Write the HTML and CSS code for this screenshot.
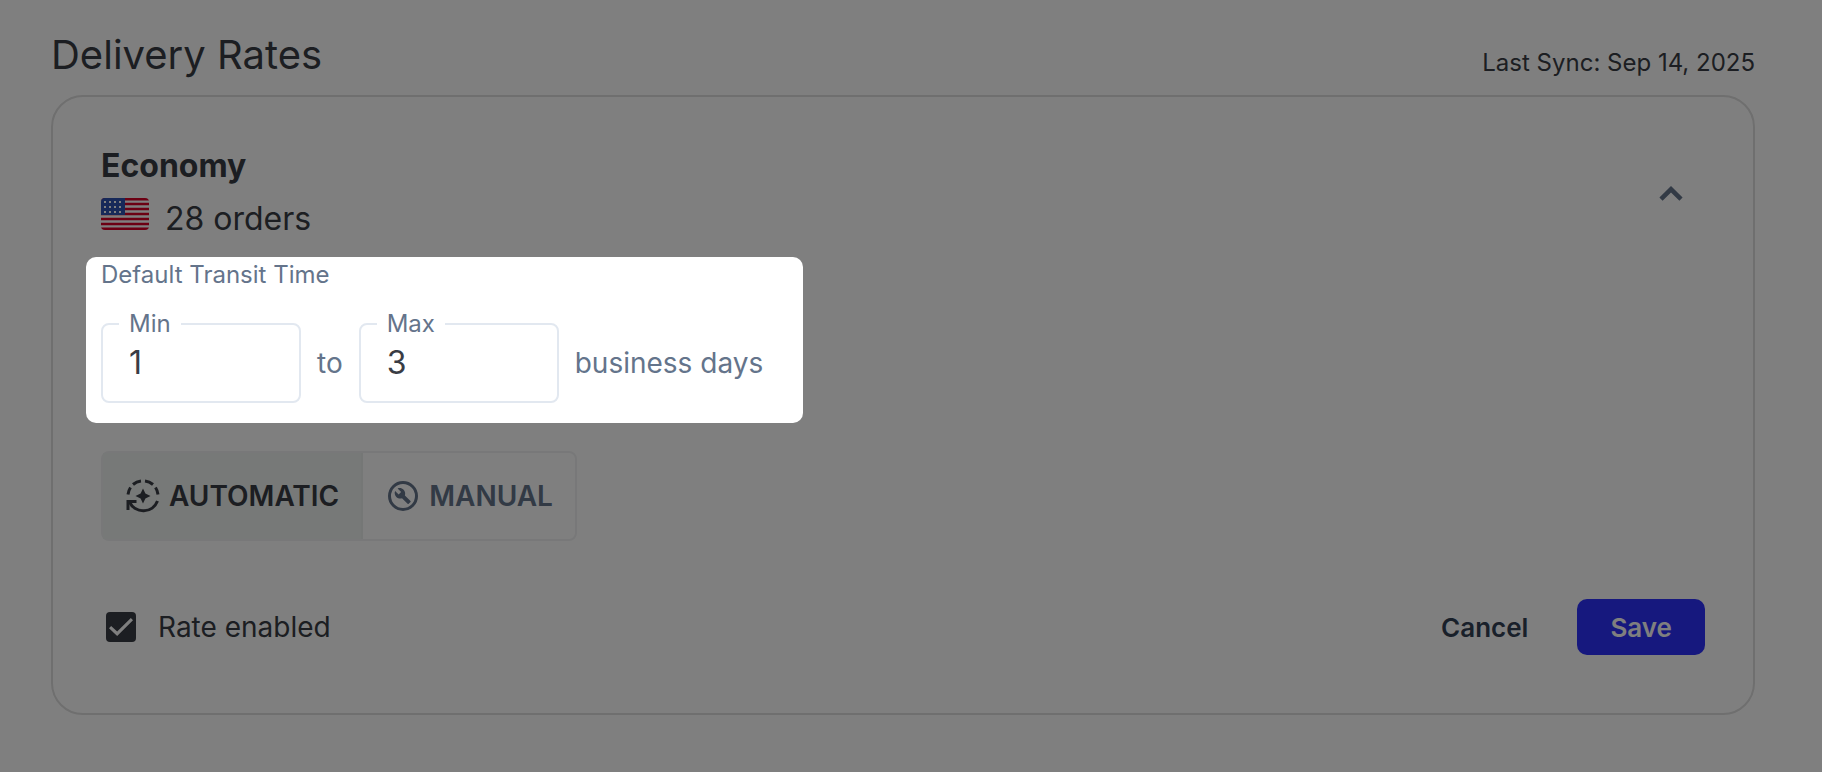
FILE: index.html
```html
<!DOCTYPE html>
<html lang="en">
<head>
  <meta charset="UTF-8">
  <meta name="viewport" content="width=device-width, initial-scale=1.0">
  <title>Delivery Rates</title>
  <link rel="stylesheet" href="styles.css">
</head>
<body>
  <header class="page-header">
    <h1>Delivery Rates</h1>
    <p class="last-sync">Last Sync: Sep 14, 2025</p>
  </header>

  <main class="card">
    <!-- Rate summary -->
    <div class="summary">
      <div>
        <h2>Economy</h2>
        <div class="orders">
          <svg class="flag" viewBox="0 0 48 32" role="img" aria-label="United States">
            <rect width="48" height="32" fill="#fff"/>
            <path d="M0 1.2h48M0 6.1h48M0 11.1h48M0 16h48M0 20.9h48M0 25.9h48M0 30.8h48" stroke="#d80027" stroke-width="2.5"/>
            <rect width="24" height="17" fill="#2e52b2"/>
            <path d="M3 4h17M3 9h17M3 14h17" stroke="#fff" stroke-width="2" stroke-dasharray="2 3"/>
          </svg>
          <span>28 orders</span>
        </div>
      </div>
      <button class="collapse" type="button" aria-label="Collapse">
        <svg viewBox="0 0 24 24"><path d="M12 8.500l-5.800 5.800 1.600 1.600L12 11.700l4.200 4.200 1.600-1.600z"/></svg>
      </button>
    </div>

    <!-- Highlighted step, everything around it is dimmed -->
    <section class="transit">
      <h3>Default Transit Time</h3>
      <div class="range">
        <fieldset class="field">
          <legend><label for="min">Min</label></legend>
          <input type="text" inputmode="numeric" id="min" value="1">
        </fieldset>
        <span class="unit">to</span>
        <fieldset class="field">
          <legend><label for="max">Max</label></legend>
          <input type="text" inputmode="numeric" id="max" value="3">
        </fieldset>
        <span class="unit">business days</span>
      </div>
    </section>

    <div class="toggle">
      <button class="toggle-btn active" type="button" aria-pressed="true">
        <svg viewBox="0 0 36 36">
          <path d="M3 16.500A15 15 0 0 1 5.500 9.500M8 6.500A15 15 0 0 1 16 3M20 3A15 15 0 0 1 28 6.500M30.500 9.500A15 15 0 0 1 33 16.500" fill="none" stroke="currentColor" stroke-width="3"/>
          <path d="M32.500 23A15.200 15.200 0 0 1 4.500 24" fill="none" stroke="currentColor" stroke-width="3"/>
          <path d="M3 32V23.500H11.500" fill="none" stroke="currentColor" stroke-width="3"/>
          <path d="M18 10.500l2.400 5.100L25.500 18l-5.100 2.400L18 25.500l-2.400-5.100L10.500 18l5.100-2.400z"/>
        </svg>
        AUTOMATIC
      </button>
      <button class="toggle-btn" type="button" aria-pressed="false">
        <svg viewBox="0 0 36 36">
          <circle cx="18" cy="18" r="13.500" fill="none" stroke="currentColor" stroke-width="3"/>
          <path d="M25.500 23l-5.600-5.500c.7-2 .2-4.200-1.300-5.800-1.600-1.600-4-2-6-1.200l3.500 3.500-2.500 2.500-3.500-3.500c-.8 2-.4 4.300 1.200 5.900 1.500 1.500 3.700 2 5.700 1.400l5.600 5.500c.3.300.8.300 1.100 0l1.800-1.800c.3-.3.300-.8 0-1z"/>
        </svg>
        MANUAL
      </button>
    </div>

    <div class="footer">
      <label class="enabled"><input type="checkbox" checked> Rate enabled</label>
      <div class="actions">
        <button class="btn" type="button">Cancel</button>
        <button class="btn primary" type="button">Save</button>
      </div>
    </div>
  </main>
</body>
</html>
```

FILE: styles.css
```css
* {
  box-sizing: border-box;
}
body {
  font-family: Inter, "Liberation Sans", sans-serif;
  background-color: #fff;
  color: #393c44;
  min-height: 100vh;
  margin: 0;
  padding: 31px 67px 32px 51px;
  overflow-x: hidden;
}
h1, h2, h3, p {
  margin: 0;
  font-weight: 400;
}
button {
  font-family: inherit;
  background: none;
  border: none;
  padding: 0;
  cursor: pointer;
}
svg {
  display: block;
  flex: none;
  fill: currentColor;
}
.page-header {
  display: flex;
  justify-content: space-between;
  align-items: flex-end;
  margin-bottom: 16px;
}
h1 {
  font-size: 40px;
  line-height: 48px;
}
.last-sync {
  font-size: 24px;
  line-height: 32px;
}
.card {
  border: 2px solid #dedede;
  border-radius: 32px;
  padding: 48px 48px 58px;
}
.summary {
  display: flex;
  justify-content: space-between;
  align-items: center;
}
h2 {
  font-size: 32px;
  line-height: 42px;
  font-weight: 700;
}
.orders {
  display: flex;
  align-items: flex-start;
  gap: 16px;
  margin-top: 11px;
  font-size: 32px;
  line-height: 42px;
}
.flag {
  width: 48px;
  height: 32px;
  border-radius: 4px;
}
.collapse {
  margin-right: 10px;
  color: #64748b;
}
.collapse svg {
  width: 48px;
  height: 48px;
}

/* Highlight */
.transit {
  position: relative;
  z-index: 1;
  width: fit-content;
  margin: 17px 0 0 -15px;
  padding: 0 40px 20px 15px;
  background-color: #fff;
  border-radius: 10px;
  box-shadow: 0 0 0 9999px rgba(0, 0, 0, 0.5);
  color: #64748b;
}
h3 {
  font-size: 24px;
  line-height: 36px;
}
.range {
  display: flex;
  align-items: center;
  gap: 16px;
  margin-top: 17px;
}
.field {
  width: 200px;
  margin: 0;
  padding: 0 16px 14px;
  border: 2px solid #e2e8f0;
  border-radius: 8px;
}
.field legend {
  padding: 0 10px;
  font-size: 24px;
  line-height: 28px;
}
.field input {
  display: block;
  width: 100%;
  height: 49px;
  padding: 0 10px;
  border: none;
  outline: none;
  background: none;
  font-family: inherit;
  font-size: 32px;
  color: #393c44;
}
.unit {
  padding-top: 12px;
  font-size: 28px;
}

.toggle {
  display: flex;
  width: fit-content;
  margin-top: 28px;
  border: 2px solid #f0f1f2;
  border-radius: 8px;
}
.toggle-btn {
  display: flex;
  align-items: center;
  gap: 8px;
  height: 86px;
  padding: 0 22px;
  font-size: 28px;
  font-weight: 600;
  color: #64748b;
}
.toggle-btn.active {
  border-right: 2px solid #ebefed;
  background-color: #eef2f0;
  color: #393c44;
}
.toggle-btn svg {
  width: 36px;
  height: 36px;
}

.footer {
  display: flex;
  justify-content: space-between;
  align-items: center;
  margin-top: 58px;
}
.enabled {
  display: flex;
  align-items: center;
  gap: 22px;
  font-size: 28px;
}
.enabled input {
  appearance: none;
  display: grid;
  place-items: center;
  width: 30px;
  height: 30px;
  margin: 0 0 0 5px;
  border-radius: 4px;
  background-color: #393c44;
}
.enabled input:checked::before {
  content: "";
  width: 24px;
  height: 18px;
  background-color: #fff;
  clip-path: polygon(9% 45%, 34% 75%, 91% 0, 100% 12%, 34% 100%, 0 57%);
}
.actions {
  display: flex;
  gap: 16px;
}
.btn {
  height: 56px;
  padding: 0 33px;
  border-radius: 10px;
  font-size: 26px;
  font-weight: 600;
  color: #334155;
}
.btn.primary {
  background-color: #2c30fd;
  color: #fff;
}
```
